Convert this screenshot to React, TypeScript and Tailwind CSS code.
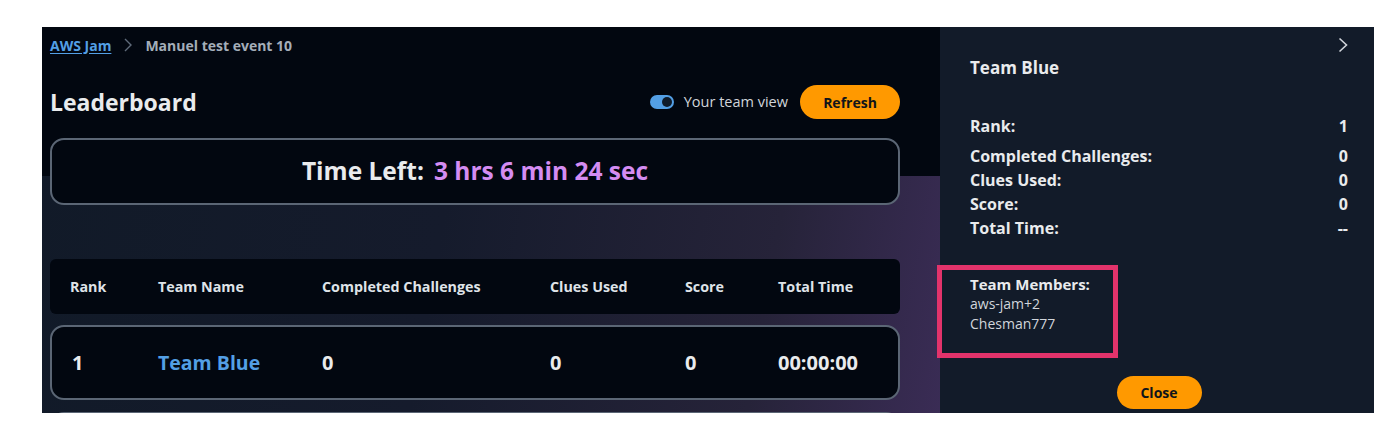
import { useState } from "react";

type Team = {
  rank: number;
  name: string;
  completed: number;
  clues: number;
  score: number;
  time: string;
};

const teams: Team[] = [
  { rank: 1, name: "Team Blue", completed: 0, clues: 0, score: 0, time: "00:00:00" },
];

const cols = "grid grid-cols-[88px_164px_228px_135px_93px_1fr] items-center";

function Toggle({ on, onChange }: { on: boolean; onChange: (v: boolean) => void }) {
  return (
    <button
      onClick={() => onChange(!on)}
      className={`relative h-[14px] w-[24px] rounded-full ${on ? "bg-[#539fe5]" : "bg-[#414d5c]"}`}
    >
      <span
        className={`absolute top-[2px] h-[10px] w-[10px] rounded-full bg-[#0f1b2a] ${
          on ? "left-[12px]" : "left-[2px]"
        }`}
      />
    </button>
  );
}

function Stat({ label, value }: { label: string; value: string }) {
  return (
    <div className="flex h-6 items-center justify-between">
      <span>{label}</span>
      <span>{value}</span>
    </div>
  );
}

export default function App() {
  const [teamView, setTeamView] = useState(true);

  return (
    <div className="min-h-screen bg-white pl-[42px] pt-[27px] font-['Open_Sans',sans-serif]">
      <div className="flex h-[386px] w-[1332px] overflow-hidden">
        {/* LEFT: leaderboard */}
        <div className="flex w-[898px] flex-col bg-[linear-gradient(100deg,#111a28_0%,#151b2c_45%,#262339_80%,#3a2c55_100%)]">
          <div className="bg-[#020710] pl-2 pr-10 pt-[9px]">
            <div className="flex h-[18px] items-center text-[14px] font-bold">
              <a href="#" className="text-[#539fe5] underline underline-offset-2">
                AWS Jam
              </a>
              <svg width="10" height="14" viewBox="0 0 10 14" className="mx-[12px]">
                <path d="M2 1l6 6-6 6" fill="none" stroke="#5f6b7a" strokeWidth="1.4" />
              </svg>
              <span className="text-[#a4aeb9]">Manuel test event 10</span>
            </div>

            <div className="mt-[31px] flex h-[34px] items-center justify-between">
              <h1 className="text-[23px] font-bold text-[#e9ebed]">Leaderboard</h1>
              <div className="flex items-center">
                <Toggle on={teamView} onChange={setTeamView} />
                <span className="ml-[10px] text-[14.5px] font-medium text-[#d1d5db]">Your team view</span>
                <button className="ml-[12px] h-[34px] w-[100px] rounded-full bg-[#ff9900] text-[14px] font-bold text-[#0f141a]">
                  Refresh
                </button>
              </div>
            </div>

            <div className="relative z-10 mt-[19px] -mb-[29px] flex h-[67px] items-center justify-center rounded-[14px] border-2 border-[#5b6675] bg-[#020710] text-[24.5px] font-bold">
              <span className="text-[#e9ebed]">Time Left:</span>
              <span className="ml-[10px] text-[#d48cf2]">3 hrs 6 min 24 sec</span>
            </div>
          </div>

          <div className="pl-2 pr-10 pt-[83px]">
            <div className={`${cols} h-[55px] rounded-md bg-[#020710] pl-5 text-[14.3px] font-bold text-[#dfe3e8]`}>
              <span>Rank</span>
              <span>Team Name</span>
              <span>Completed Challenges</span>
              <span>Clues Used</span>
              <span>Score</span>
              <span>Total Time</span>
            </div>

            {teams.map((t) => (
              <div
                key={t.rank}
                className={`${cols} mt-[11px] h-[75px] rounded-[14px] border-2 border-[#5b6675] bg-[#020710] pl-[18px] text-[20px] font-bold text-[#e9ebed]`}
              >
                <span className="pl-[2px]">{t.rank}</span>
                <span className="text-[19.5px] text-[#539fe5]">{t.name}</span>
                <span>{t.completed}</span>
                <span>{t.clues}</span>
                <span>{t.score}</span>
                <span>{t.time}</span>
              </div>
            ))}
            {/* next card, scrolled out of view */}
            <div className="mt-[12px] h-[75px] rounded-[14px] border-2 border-[#5b6675] bg-[#020710]" />
          </div>
        </div>

        {/* RIGHT: team details panel */}
        <div className="relative flex w-[434px] flex-col bg-[#121b29] pl-[30px] pr-[26px] text-[#e9ebed]">
          <div className="flex justify-end pt-[10px]">
            <svg width="10" height="16" viewBox="0 0 10 16">
              <path d="M1.5 1.5l7 6.5-7 6.5" fill="none" stroke="#d1d5db" strokeWidth="1.6" />
            </svg>
          </div>
          <h2 className="mt-[3px] text-[17px] leading-6 font-bold">Team Blue</h2>

          <div className="mt-[34px] text-[16px] font-bold">
            <Stat label="Rank:" value="1" />
            <div className="mt-[6px]">
              <Stat label="Completed Challenges:" value="0" />
              <Stat label="Clues Used:" value="0" />
              <Stat label="Score:" value="0" />
              <Stat label="Total Time:" value="--" />
            </div>
          </div>

          <div className="mt-[34px]">
            <div className="text-[15px] leading-5 font-bold">Team Members:</div>
            <div className="text-[14px] leading-5 text-[#d1d5db]">aws-jam+2</div>
            <div className="text-[14px] leading-5 text-[#d1d5db]">Chesman777</div>
          </div>

          <div className="mt-auto mb-[4px] flex justify-center">
            <button className="h-[33px] w-[85px] rounded-full bg-[#ff9900] text-[14px] font-bold text-[#0f141a]">
              Close
            </button>
          </div>

          {/* highlight annotation */}
          <div className="pointer-events-none absolute left-[-3px] top-[238px] h-[93px] w-[181px] border-[5px] border-[#e2336b]" />
        </div>
      </div>
    </div>
  );
}
